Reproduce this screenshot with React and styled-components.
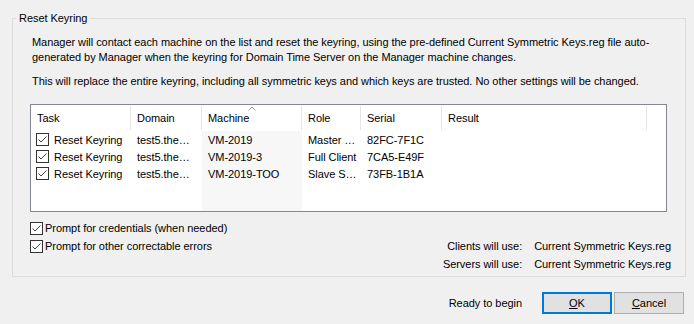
import React from 'react'
import styled, { createGlobalStyle } from 'styled-components'

const columns = [
  { key: 'task', title: 'Task', width: 100 },
  { key: 'domain', title: 'Domain', width: 71 },
  { key: 'machine', title: 'Machine', width: 100, sorted: true },
  { key: 'role', title: 'Role', width: 59 },
  { key: 'serial', title: 'Serial', width: 81 },
  { key: 'result', title: 'Result', width: 205 },
]

const rows = [
  { task: 'Reset Keyring', domain: 'test5.the…', machine: 'VM-2019', role: 'Master …', serial: '82FC-7F1C', result: '' },
  { task: 'Reset Keyring', domain: 'test5.the…', machine: 'VM-2019-3', role: 'Full Client', serial: '7CA5-E49F', result: '' },
  { task: 'Reset Keyring', domain: 'test5.the…', machine: 'VM-2019-TOO', role: 'Slave S…', serial: '73FB-1B1A', result: '' },
]

const template = columns.map((c) => `${c.width}px`).join(' ') + ' 1fr'

function CheckBox() {
  return (
    <Box>
      <svg width="11" height="11" viewBox="0 0 11 11">
        <path d="M1.5 5.5 L4 8 L9.5 2.5" fill="none" stroke="#444" strokeWidth="1" />
      </svg>
    </Box>
  )
}

export default function App() {
  return (
    <>
      <GlobalStyle />
      <Page>
        <Group>
          <Legend>Reset Keyring</Legend>
          <GroupBody>
            <Para>
              Manager will contact each machine on the list and reset the keyring, using the pre-defined Current Symmetric Keys.reg file auto-
              <br />
              generated by Manager when the keyring for Domain Time Server on the Manager machine changes.
            </Para>
            <Para spaced>
              This will replace the entire keyring, including all symmetric keys and which keys are trusted. No other settings will be changed.
            </Para>

            <List>
              <HeaderRow>
                {columns.map((c) => (
                  <HeaderCell key={c.key}>
                    {c.sorted && (
                      <SortArrow width="8" height="5" viewBox="0 0 8 5">
                        <path d="M0.5 4.5 L4 1 L7.5 4.5" fill="none" stroke="#9a9a9a" strokeWidth="1" />
                      </SortArrow>
                    )}
                    {c.title}
                  </HeaderCell>
                ))}
              </HeaderRow>
              <ListBody>
                {rows.map((r, i) => (
                  <Row key={i}>
                    <TaskCell>
                      <CheckBox />
                      <span>{r.task}</span>
                    </TaskCell>
                    <Cell>{r.domain}</Cell>
                    <Cell>{r.machine}</Cell>
                    <Cell>{r.role}</Cell>
                    <Cell>{r.serial}</Cell>
                    <Cell>{r.result}</Cell>
                  </Row>
                ))}
              </ListBody>
            </List>

            <Options>
              <Checks>
                <CheckRow>
                  <CheckBox />
                  <span>Prompt for credentials (when needed)</span>
                </CheckRow>
                <CheckRow>
                  <CheckBox />
                  <span>Prompt for other correctable errors</span>
                </CheckRow>
              </Checks>
              <UseGrid>
                <UseLabel>Clients will use:</UseLabel>
                <span>Current Symmetric Keys.reg</span>
                <UseLabel>Servers will use:</UseLabel>
                <span>Current Symmetric Keys.reg</span>
              </UseGrid>
            </Options>
          </GroupBody>
        </Group>

        <Footer>
          <Status>Ready to begin</Status>
          <Button primary>
            <u>O</u>K
          </Button>
          <Button>
            <u>C</u>ancel
          </Button>
        </Footer>
      </Page>
    </>
  )
}

const GlobalStyle = createGlobalStyle`
  html, body {
    margin: 0;
    background: #f0f0f0;
  }
  body {
    font-family: "Liberation Sans", Arial, sans-serif;
    font-size: 11px;
    letter-spacing: -0.05px;
    color: #000;
  }
`

const Page = styled.div`
  box-sizing: border-box;
  width: 694px;
  height: 324px;
  padding: 11px 8px 0 12px;
`

const Group = styled.fieldset`
  margin: 0;
  padding: 0;
  min-width: 0;
  border: 1px solid #dcdcdc;
`

const Legend = styled.legend`
  margin-left: 3px;
  padding: 0 3px;
  line-height: 14px;
`

const GroupBody = styled.div`
  padding: 10px 14px 3px 17px;
`

const Para = styled.p`
  margin: ${(p) => (p.spaced ? '9px 0 0' : '0')};
  padding-left: 2px;
  line-height: 15px;
  white-space: nowrap;
`

const List = styled.div`
  box-sizing: border-box;
  display: flex;
  flex-direction: column;
  height: 108px;
  margin: 15px 4px 0 0;
  border: 1px solid #828790;
  background: #fff;
`

const HeaderRow = styled.div`
  display: grid;
  grid-template-columns: ${template};
  height: 26px;
`

const HeaderCell = styled.div`
  position: relative;
  display: flex;
  align-items: center;
  margin: 1px 0;
  padding-left: 6px;
  border-right: 1px solid #e5e5e5;
`

const SortArrow = styled.svg`
  position: absolute;
  top: 0;
  left: 46px;
`

const ListBody = styled.div`
  flex: 1;
  background: linear-gradient(
    to right,
    #fff 171px,
    #f7f7f7 171px,
    #f7f7f7 271px,
    #fff 271px
  );
`

const Row = styled.div`
  display: grid;
  grid-template-columns: ${template};
  height: 17px;
  align-items: center;
`

const Cell = styled.div`
  padding-left: 6px;
  white-space: nowrap;
  overflow: hidden;
`

const TaskCell = styled(Cell)`
  display: flex;
  align-items: center;
  gap: 5px;
  padding-left: 5px;
`

const Box = styled.span`
  box-sizing: border-box;
  display: inline-flex;
  align-items: center;
  justify-content: center;
  flex: none;
  width: 13px;
  height: 13px;
  border: 1px solid #333;
  background: #fff;
`

const Options = styled.div`
  display: flex;
  justify-content: space-between;
  height: 54px;
  margin-top: 7px;
`

const Checks = styled.div`
  display: flex;
  flex-direction: column;
`

const CheckRow = styled.div`
  display: flex;
  align-items: center;
  gap: 2px;
  height: 18px;
`

const UseGrid = styled.div`
  display: grid;
  grid-template-columns: auto auto;
  grid-auto-rows: 18px;
  align-items: center;
  column-gap: 12px;
  margin-top: 18px;
`

const UseLabel = styled.span`
  text-align: right;
`

const Footer = styled.div`
  display: flex;
  justify-content: flex-end;
  align-items: center;
  gap: 2px;
  margin-top: 15px;
  padding-right: 2px;
`

const Status = styled.span`
  margin-right: 18px;
`

const Button = styled.button`
  box-sizing: border-box;
  width: 70px;
  height: 22px;
  padding: 0;
  font: inherit;
  color: #000;
  background: #e1e1e1;
  border: ${(p) => (p.primary ? '2px solid #0078d7' : '1px solid #adadad')};
`
